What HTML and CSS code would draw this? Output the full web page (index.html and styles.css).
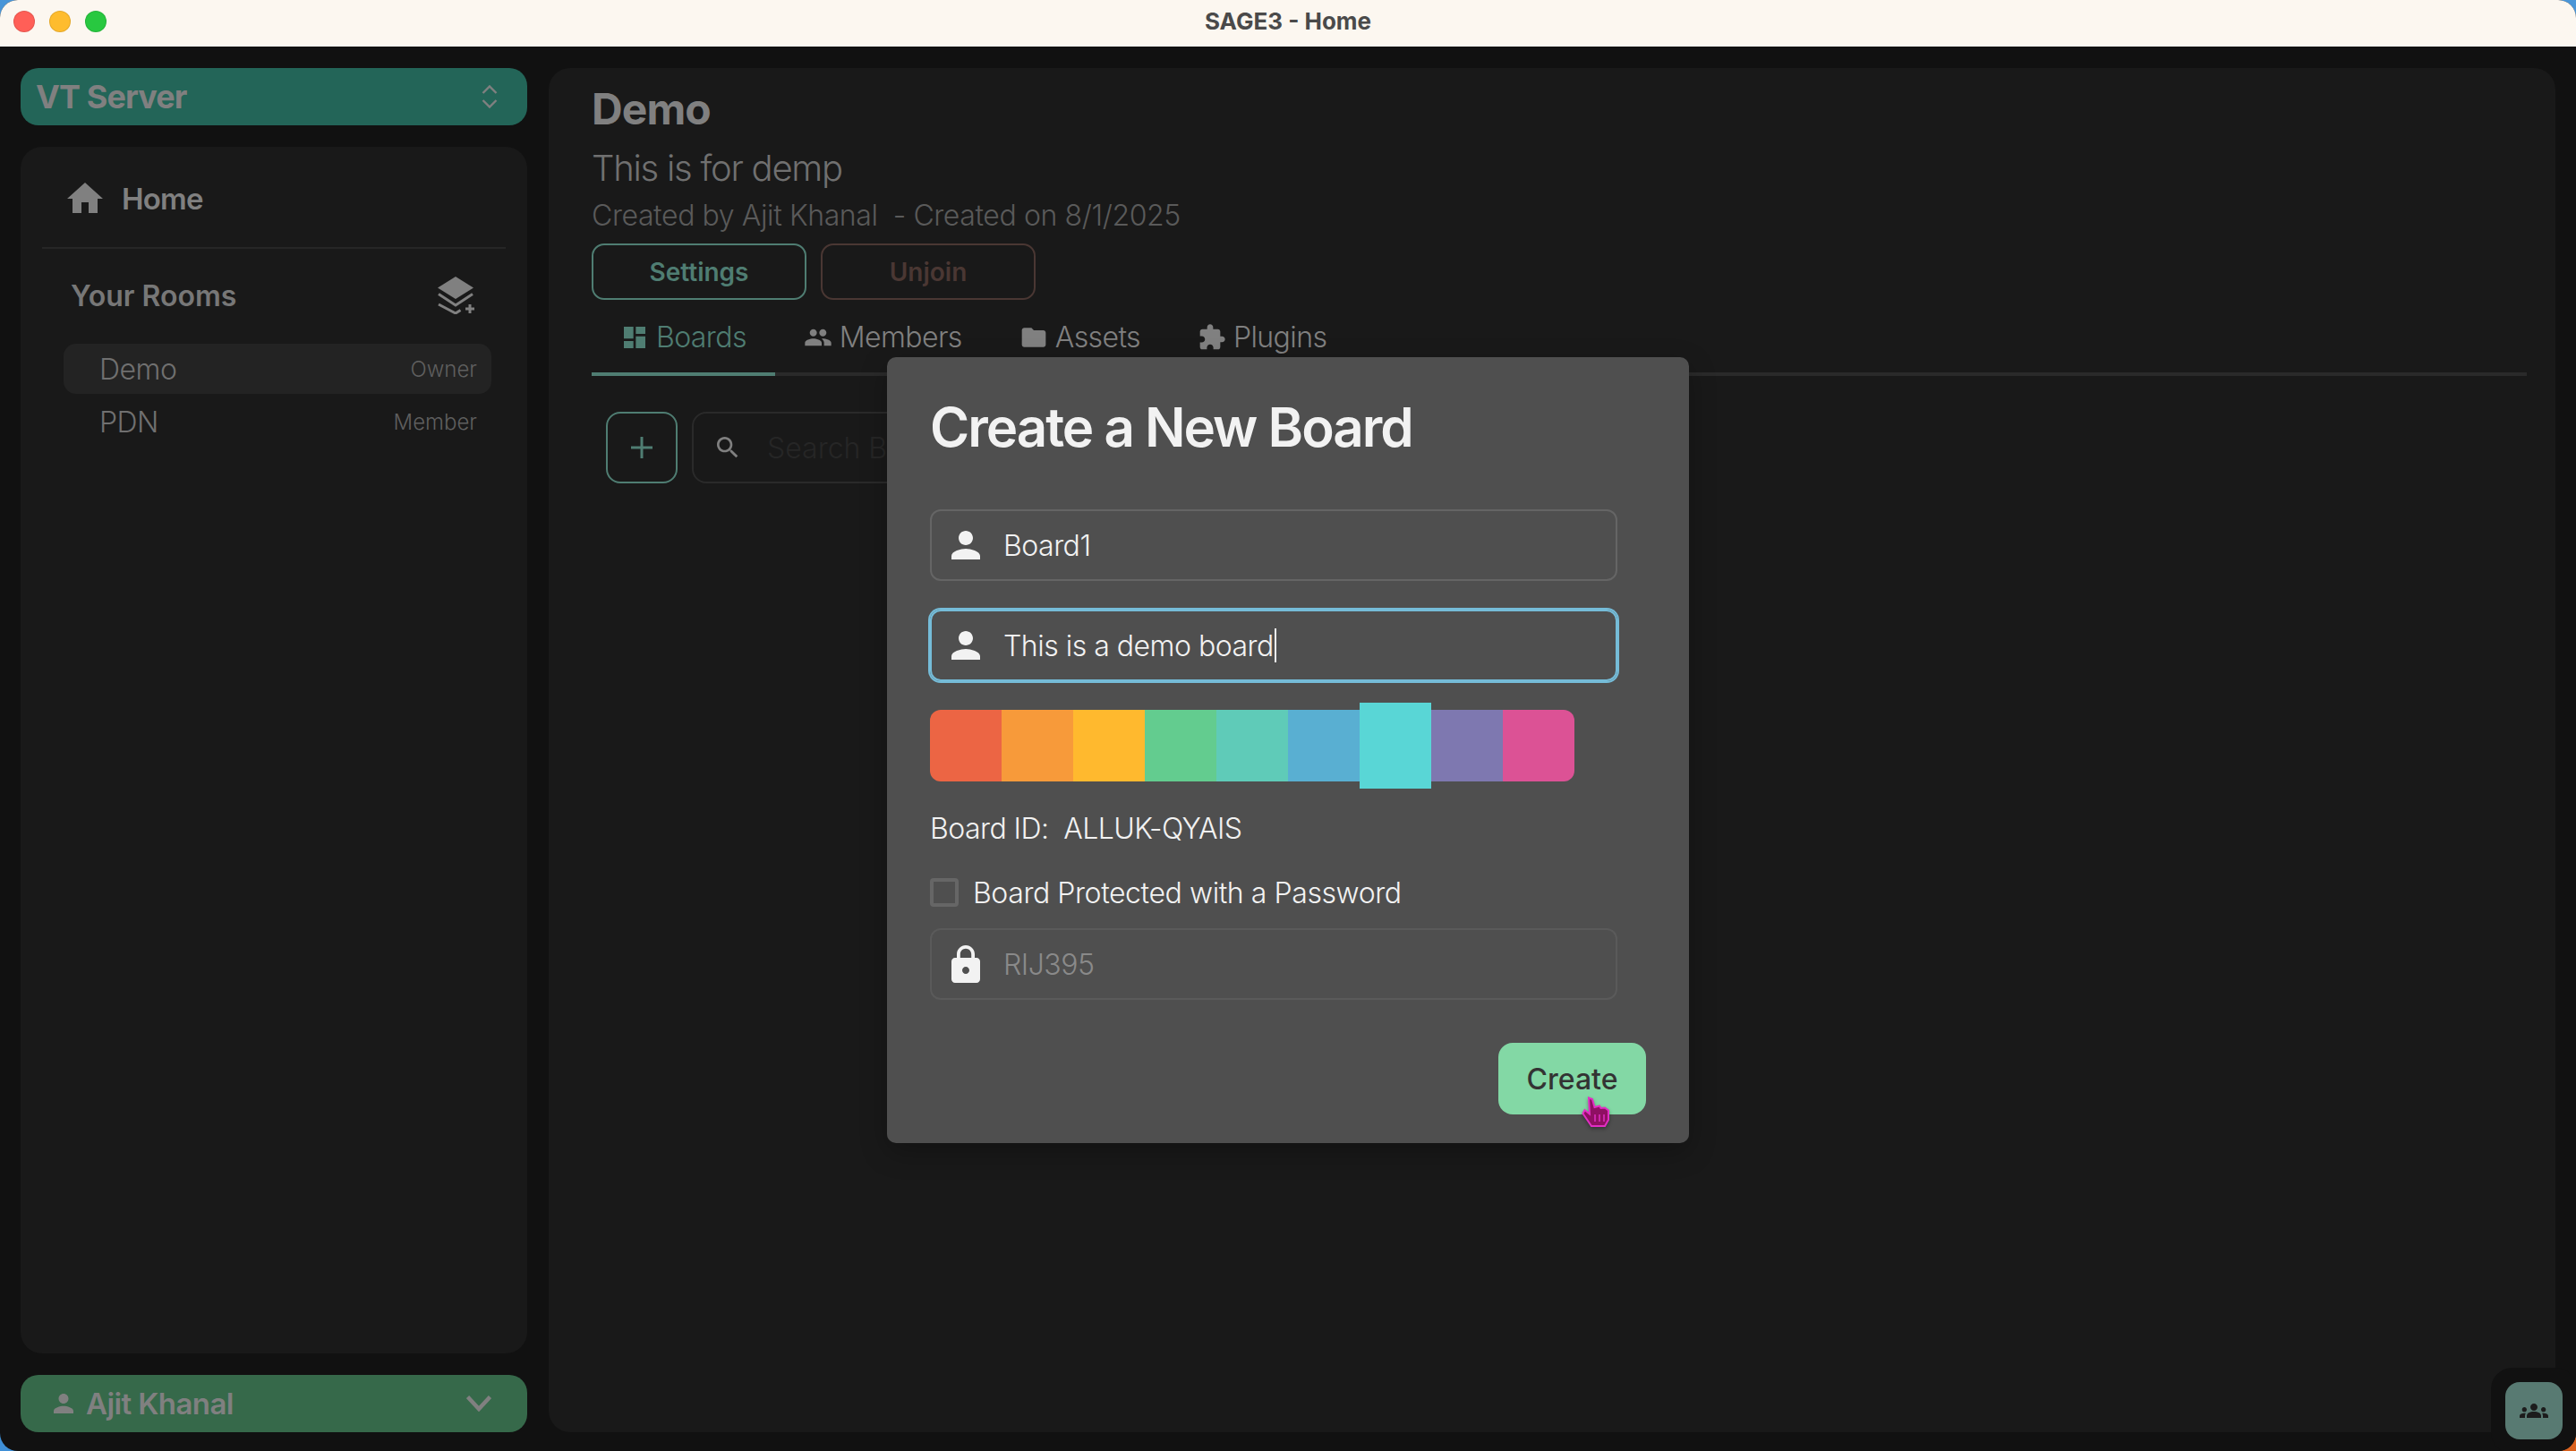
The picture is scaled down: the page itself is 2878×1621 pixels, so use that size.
FILE: index.html
```html
<!DOCTYPE html>
<html lang="en">
<head>
<meta charset="utf-8">
<title>SAGE3 - Home</title>
<link rel="stylesheet" href="styles.css">
</head>
<body>
<div class="window">
  <header class="titlebar">
    <div class="lights"><span class="light red"></span><span class="light yellow"></span><span class="light green"></span></div>
    <div class="wintitle">SAGE3 - Home</div>
    <div></div>
  </header>
  <div class="app">
    <aside class="sidebar">
      <div class="bar server-bar">
        <span class="server-name">VT Server</span>
        <svg class="updown" viewBox="0 0 18 26" fill="none" stroke="#808080" stroke-width="2.4"><path d="M1.5 9 9 1.5 16.5 9M1.5 17 9 24.5 16.5 17"/></svg>
      </div>
      <nav class="side-panel">
        <div class="home-row">
          <svg class="home-icon" viewBox="0 0 24 24" fill="#808080"><path d="M10 20v-6h4v6h5v-8h3L12 3 2 12h3v8z"/></svg>
          <span class="home-label">Home</span>
        </div>
        <div class="divider"></div>
        <div class="rooms-head">
          <span class="rooms-title">Your Rooms</span>
          <svg class="layers" viewBox="0 0 41 42"><path d="M20 0 40 12.500 20 25 0 12.500z" fill="#808080"/><path d="M1 19.500 20 32 39 19.500M1 31 20 41 25.500 37.500" fill="none" stroke="#808080" stroke-width="3"/><path d="M36 31v10M31 36h10" fill="none" stroke="#808080" stroke-width="3"/></svg>
        </div>
        <div class="room active"><span class="room-name">Demo</span><span class="room-role">Owner</span></div>
        <div class="room"><span class="room-name">PDN</span><span class="room-role">Member</span></div>
      </nav>
      <div class="bar user-bar">
        <svg class="user-icon" viewBox="4 4 16 16" fill="#808080"><path d="M12 12c2.210 0 4-1.790 4-4s-1.790-4-4-4-4 1.790-4 4 1.790 4 4 4zm0 2c-2.670 0-8 1.340-8 4v2h16v-2c0-2.660-5.330-4-8-4z"/></svg>
        <span class="user-name">Ajit Khanal</span>
        <svg class="chev" viewBox="0 0 28 18" fill="none" stroke="#808080" stroke-width="4.500"><path d="M1.500 1.500 14 15 26.500 1.500"/></svg>
      </div>
    </aside>
    <main class="main">
      <h1 class="room-title">Demo</h1>
      <p class="room-desc">This is for demp</p>
      <p class="room-meta">Created by Ajit Khanal&nbsp; - Created on 8/1/2025</p>
      <div class="actions">
        <button class="btn btn-teal">Settings</button>
        <button class="btn btn-red">Unjoin</button>
      </div>
      <div class="tabs">
        <div class="tab current"><svg class="tab-icon" viewBox="0 0 24 24" fill="#4f7d72"><path d="M3 13h8V3H3v10zm0 8h8v-6H3v6zm10 0h8V11h-8v10zm0-18v6h8V3h-8z"/></svg>Boards</div>
        <div class="tab"><svg class="tab-icon" viewBox="0 0 24 24" fill="#808080"><path d="M16 11c1.660 0 2.990-1.340 2.990-3S17.660 5 16 5c-1.660 0-3 1.340-3 3s1.340 3 3 3zm-8 0c1.660 0 2.990-1.340 2.990-3S9.660 5 8 5C6.340 5 5 6.340 5 8s1.340 3 3 3zm0 2c-2.330 0-7 1.170-7 3.500V19h14v-2.500c0-2.330-4.670-3.500-7-3.500zm8 0c-.290 0-.620.020-.970.050 1.160.840 1.970 1.970 1.970 3.450V19h6v-2.500c0-2.330-4.670-3.500-7-3.500z"/></svg>Members</div>
        <div class="tab"><svg class="tab-icon" viewBox="0 0 24 24" fill="#808080"><path d="M10 4H4c-1.100 0-1.990.9-1.990 2L2 18c0 1.100.9 2 2 2h16c1.100 0 2-.9 2-2V8c0-1.100-.9-2-2-2h-8l-2-2z"/></svg>Assets</div>
        <div class="tab"><svg class="tab-icon" viewBox="0 0 24 24" fill="#808080"><path d="M20.500 11H19V7c0-1.100-.9-2-2-2h-4V3.500C13 2.120 11.880 1 10.500 1S8 2.120 8 3.500V5H4c-1.100 0-1.990.9-1.990 2v3.800H3.500c1.490 0 2.700 1.210 2.700 2.700s-1.210 2.700-2.700 2.700H2V20c0 1.100.9 2 2 2h3.800v-1.500c0-1.490 1.210-2.700 2.700-2.700 1.490 0 2.700 1.210 2.700 2.700V22H17c1.100 0 2-.9 2-2v-4h1.500c1.380 0 2.500-1.120 2.500-2.500S21.880 11 20.500 11z"/></svg>Plugins</div>
      </div>
      <div class="toolbar">
        <button class="add-btn"><svg viewBox="0 0 24 24" fill="none" stroke="#4f7d72" stroke-width="3"><path d="M12 0v24M0 12h24"/></svg></button>
        <div class="search">
          <svg class="search-icon" viewBox="3 3 18 18" fill="#808080"><path d="M15.500 14h-.79l-.28-.27C15.410 12.590 16 11.110 16 9.500 16 5.910 13.090 3 9.500 3S3 5.910 3 9.500 5.910 16 9.500 16c1.610 0 3.090-.59 4.230-1.570l.27.28v.79l5 4.990L20.490 19l-4.990-5zm-6 0C7.010 14 5 11.990 5 9.500S7.010 5 9.500 5 14 7.010 14 9.500 11.990 14 9.500 14z"/></svg>
          <span class="search-ph">Search Boards</span>
        </div>
      </div>
    </main>
  </div>
  <div class="corner-box"><button class="corner-btn"><svg viewBox="0 0 24 24" fill="#1c1c1c"><path d="M12 12.750c1.630 0 3.070.39 4.240.9 1.080.48 1.760 1.560 1.760 2.730V18H6v-1.610c0-1.180.68-2.260 1.760-2.730 1.170-.52 2.610-.91 4.240-.91zM4 13c1.100 0 2-.9 2-2s-.9-2-2-2-2 .9-2 2 .9 2 2 2zm1.130 1.100c-.37-.06-.74-.1-1.130-.1-.99 0-1.930.21-2.780.58C.48 14.900 0 15.620 0 16.430V18h4.500v-1.610c0-.83.23-1.610.63-2.290zM20 13c1.100 0 2-.9 2-2s-.9-2-2-2-2 .9-2 2 .9 2 2 2zm4 3.430c0-.81-.48-1.530-1.220-1.850-.85-.37-1.790-.58-2.780-.58-.39 0-.76.04-1.130.1.4.68.63 1.460.63 2.290V18H24v-1.570zM12 6c1.660 0 3 1.340 3 3s-1.340 3-3 3-3-1.340-3-3 1.340-3 3-3z"/></svg></button></div>
  <section class="modal">
    <h2 class="modal-title">Create a New Board</h2>
    <div class="field">
      <svg class="field-icon" viewBox="4 4 16 16" fill="#f2f2f2"><path d="M12 12c2.210 0 4-1.790 4-4s-1.790-4-4-4-4 1.790-4 4 1.790 4 4 4zm0 2c-2.670 0-8 1.340-8 4v2h16v-2c0-2.660-5.330-4-8-4z"/></svg>
      <span class="field-text">Board1</span>
    </div>
    <div class="field focused">
      <svg class="field-icon" viewBox="4 4 16 16" fill="#f2f2f2"><path d="M12 12c2.210 0 4-1.790 4-4s-1.790-4-4-4-4 1.790-4 4 1.790 4 4 4zm0 2c-2.670 0-8 1.340-8 4v2h16v-2c0-2.660-5.330-4-8-4z"/></svg>
      <span class="field-text">This is a demo board</span><span class="caret"></span>
    </div>
    <div class="swatches">
      <span class="swatch s1"></span><span class="swatch s2"></span><span class="swatch s3"></span><span class="swatch s4"></span><span class="swatch s5"></span><span class="swatch s6"></span><span class="swatch s7"></span><span class="swatch s8"></span><span class="swatch s9"></span>
    </div>
    <div class="board-id">Board ID:&nbsp; ALLUK-QYAIS</div>
    <label class="check-row"><span class="check"></span>Board Protected with a Password</label>
    <div class="field disabled">
      <svg class="lock-icon" viewBox="4 1 16 21" fill="#f2f2f2"><path d="M18 8h-1V6c0-2.760-2.240-5-5-5S7 3.240 7 6v2H6c-1.100 0-2 .9-2 2v10c0 1.100.9 2 2 2h12c1.100 0 2-.9 2-2V10c0-1.100-.9-2-2-2zm-6 9c-1.100 0-2-.9-2-2s.9-2 2-2 2 .9 2 2-.9 2-2 2zm3.100-9H8.900V6c0-1.710 1.390-3.100 3.100-3.100 1.710 0 3.100 1.390 3.100 3.100v2z"/></svg>
      <span class="field-text placeholder">RIJ395</span>
    </div>
    <div class="modal-foot"><button class="create">Create</button></div>
  </section>
  <svg class="cursor" viewBox="0 0 32 34"><path d="M8 1.500 12 3 14.500 12 20 10.500 21.500 13 26 12.500 30 15.500 30 26 26 33 11 33 1.500 19 3.500 15 9 19.500z" fill="#8f0f62" stroke="#e22ec4" stroke-width="2"/><path d="M15 20v8M20 20v8M25 20v8" stroke="#e22ec4" stroke-width="1.500"/></svg>
</div>
</body>
</html>
```
FILE: styles.css
```css
* { box-sizing: border-box; }
html, body { margin: 0; height: 100%; }
body {
  background:
    linear-gradient(to bottom, #4a96d8 50%, transparent 50%),
    linear-gradient(to right, #3f8fd6 50%, #d9621f 50%);
  overflow: hidden;
  font-family: Inter, "Liberation Sans", sans-serif;
}
button { font-family: inherit; padding: 0; margin: 0; background: none; border: 0; }
h1, h2, p { margin: 0; }

.window {
  position: relative;
  width: 2878px;
  height: 1621px;
  background: #111111;
  border-radius: 20px;
  overflow: hidden;
  display: flex;
  flex-direction: column;
}

.titlebar {
  height: 52px;
  flex: none;
  background: #fcf7f0;
  display: grid;
  grid-template-columns: 1fr auto 1fr;
  align-items: center;
  padding-bottom: 5px;
}
.lights { display: flex; gap: 16px; padding-left: 15px; }
.light { width: 24px; height: 24px; border-radius: 50%; border: 1px solid rgba(0,0,0,.1); }
.red { background: #ff5f57; }
.yellow { background: #febc2e; }
.green { background: #28c840; }
.wintitle { font-size: 26px; font-weight: 700; color: #4a4a4a; }

.app {
  flex: 1;
  display: flex;
  gap: 24px;
  padding: 24px 23px 21px;
  min-height: 0;
}

.sidebar { width: 566px; flex: none; display: flex; flex-direction: column; gap: 24px; }
.bar {
  height: 64px;
  flex: none;
  border-radius: 20px;
  display: flex;
  align-items: center;
  color: #808080;
  font-weight: 700;
}
.server-bar { background: #236558; padding: 0 33px 0 17px; justify-content: space-between; }
.server-name { font-size: 36px; letter-spacing: -0.9px; }
.updown { width: 18px; height: 26px; }
.user-bar { background: #36694a; padding: 0 40px 0 37px; }
.user-icon { width: 22px; height: 22px; margin-right: 14px; }
.user-name { font-size: 33px; font-weight: 600; flex: 1; letter-spacing: -0.6px; }
.chev { width: 28px; height: 18px; }

.side-panel {
  flex: 1;
  background: #191919;
  border-radius: 24px;
  padding-top: 34px;
}
.home-row { display: flex; align-items: center; gap: 17px; padding-left: 48px; height: 48px; }
.home-icon { width: 48px; height: 48px; }
.home-label { font-size: 33px; font-weight: 600; color: #808080; letter-spacing: -0.8px; }
.divider { height: 2px; margin: 30px 24px 0; background: #262626; }
.rooms-head {
  margin-top: 31px;
  height: 42px;
  padding: 0 59px 0 56px;
  display: flex;
  align-items: center;
  justify-content: space-between;
}
.rooms-title { font-size: 32px; font-weight: 600; color: #777777; }
.layers { width: 41px; height: 42px; }
.room {
  height: 56px;
  margin: 3px 40px 0 48px;
  padding: 0 16px 0 40px;
  border-radius: 14px;
  display: flex;
  align-items: center;
  justify-content: space-between;
  color: #707070;
}
.room.active { background: #232323; margin-top: 33px; }
.room-name { font-size: 32px; font-weight: 300; letter-spacing: -0.5px; }
.room-role { font-size: 24px; font-weight: 300; color: #5f5f5f; }

.main {
  flex: 1;
  background: #191919;
  border-radius: 24px;
  padding: 16px 32px 0 48px;
  min-width: 0;
}
.room-title { font-size: 48px; line-height: 60px; font-weight: 700; color: #808080; letter-spacing: -0.9px; }
.room-desc { margin-top: 12px; font-size: 40px; line-height: 48px; font-weight: 300; color: #707070; letter-spacing: -1.25px; }
.room-meta { margin-top: 9px; font-size: 32px; line-height: 40px; font-weight: 300; color: #5a5a5a; letter-spacing: -0.4px; }
.actions { display: flex; gap: 16px; margin-top: 11px; }
.btn {
  width: 240px;
  height: 63px;
  border-radius: 14px;
  font-size: 28px;
  font-weight: 600;
  background: none;
}
.btn-teal { border: 2px solid #4f7d72; color: #4f7d72; }
.btn-red { border: 2px solid #4a3733; color: #4a3733; }

.tabs {
  height: 85px;
  display: flex;
  align-items: stretch;
  border-bottom: 4px solid #2a2a2a;
}
.tab {
  display: flex;
  align-items: center;
  gap: 8px;
  padding: 2px 32px 0;
  height: 85px;
  font-size: 32px;
  font-weight: 300;
  letter-spacing: -0.6px;
  color: #808080;
  border-bottom: 4px solid transparent;
}
.tab.current { color: #4f7d72; border-bottom-color: #4f7d72; }
.tab-icon { width: 32px; height: 32px; flex: none; }

.toolbar { display: flex; gap: 16px; margin: 40px 0 0 16px; }
.add-btn {
  width: 80px;
  height: 80px;
  border: 2px solid #4f7d72;
  border-radius: 16px;
  display: flex;
  align-items: center;
  justify-content: center;
}
.add-btn svg { width: 24px; height: 24px; }
.search {
  width: 700px;
  height: 80px;
  border: 2px solid #2a2a2a;
  border-radius: 16px;
  display: flex;
  align-items: center;
  padding-left: 26px;
  gap: 32px;
}
.search-icon { width: 24px; height: 24px; }
.search-ph { font-size: 32px; font-weight: 300; color: #262626; }

.corner-box {
  position: absolute;
  right: -1px;
  bottom: -3px;
  padding: 16px;
  background: #111111;
  border-radius: 24px;
}
.corner-btn {
  display: flex;
  align-items: center;
  justify-content: center;
  width: 64px;
  height: 64px;
  border-radius: 16px;
  background: #587a72;
}
.corner-btn svg { width: 32px; height: 32px; }

.modal {
  position: absolute;
  left: 991px;
  top: 399px;
  width: 896px;
  height: 878px;
  background: #4f4f4f;
  border-radius: 10px;
  padding: 42px 48px 0;
  box-shadow: 0 10px 30px rgba(0,0,0,.25);
  display: flex;
  flex-direction: column;
  color: #f2f2f2;
}
.modal-title { font-size: 60px; line-height: 72px; font-weight: 600; letter-spacing: -2px; }
.field {
  width: 768px;
  height: 80px;
  margin-top: 56px;
  border: 2px solid #656565;
  border-radius: 12px;
  display: flex;
  align-items: center;
  padding-left: 22px;
  flex: none;
}
.field.focused {
  margin-top: 32px;
  border-color: #75bcd8;
  box-shadow: 0 0 0 2px #75bcd8;
}
.field.disabled { margin-top: 24px; border-color: #5a5a5a; }
.field-icon { width: 32px; height: 32px; margin-right: 26px; flex: none; }
.lock-icon { width: 32px; height: 42px; margin-right: 26px; flex: none; }
.field-text { font-size: 32px; font-weight: 300; letter-spacing: -0.5px; }
.placeholder { color: #8a8a8a; }
.caret { width: 2px; height: 38px; background: #f2f2f2; margin-left: 1px; }
.swatches { display: flex; align-items: center; margin-top: 24px; height: 96px; flex: none; }
.swatch { width: 80px; height: 80px; }
.s1 { background: #ec6544; border-radius: 12px 0 0 12px; }
.s2 { background: #f79a3a; }
.s3 { background: #ffb92e; }
.s4 { background: #63cc8f; }
.s5 { background: #5fcbb8; }
.s6 { background: #59afd2; }
.s7 { background: #59d6d6; height: 96px; }
.s8 { background: #7e78b0; }
.s9 { background: #dc5295; border-radius: 0 12px 12px 0; }
.board-id { margin-top: 25px; font-size: 32px; line-height: 40px; font-weight: 300; letter-spacing: -0.55px; }
.check-row { margin-top: 35px; display: flex; align-items: center; gap: 16px; font-size: 32px; font-weight: 300; height: 32px; letter-spacing: -0.42px; }
.check { width: 32px; height: 32px; border: 4px solid #666666; border-radius: 4px; flex: none; }
.modal-foot { display: flex; justify-content: flex-end; margin-top: 48px; }
.create {
  width: 165px;
  height: 80px;
  border-radius: 16px;
  background: #83d8a5;
  color: #333333;
  font-size: 32px;
  font-weight: 500;
}

.cursor {
  position: absolute;
  left: 1767px;
  top: 1225px;
  width: 32px;
  height: 34px;
  filter: drop-shadow(0 2px 2px rgba(0,0,0,.35));
}
```
